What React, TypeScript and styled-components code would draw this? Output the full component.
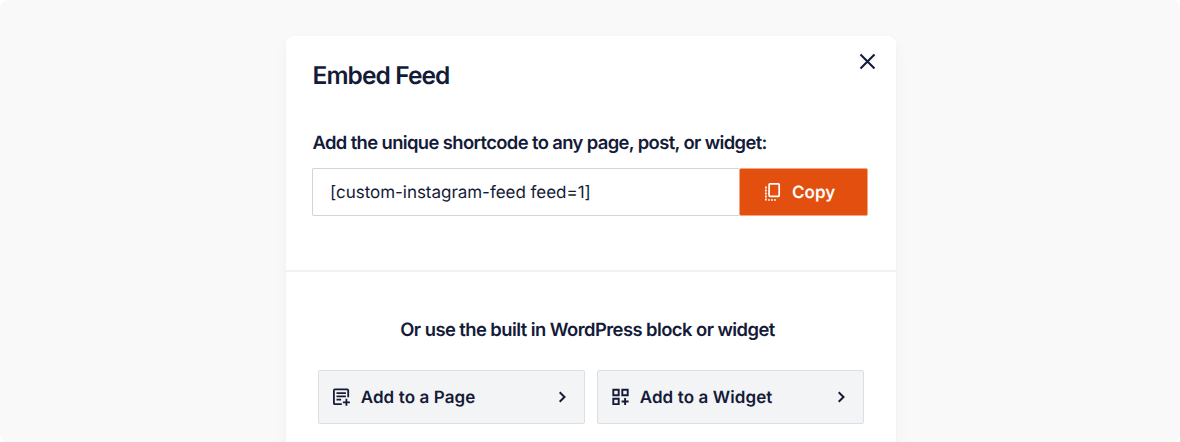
import React from "react";
import styled, { createGlobalStyle } from "styled-components";

const GlobalStyle = createGlobalStyle`
  * { box-sizing: border-box; }
  body {
    margin: 0;
    background: #fff;
    font-family: Inter, "Liberation Sans", sans-serif;
    color: #141b38;
    text-rendering: geometricPrecision;
  }
  h2, h3, p { margin: 0; }
  button { font-family: inherit; color: inherit; margin: 0; text-rendering: inherit; }
  svg { display: block; flex: none; }
`;

const Page = styled.main`
  height: 442px;
  overflow: hidden;
  display: flex;
  justify-content: center;
  align-items: flex-start;
  padding: 36px 0 0 2px;
  background: #f9f9f9;
  border-radius: 8px;
`;

const Modal = styled.section`
  width: 610px;
  height: 470px;
  background: #fff;
  border-radius: 8px;
  box-shadow: 0 6px 16px rgba(0, 0, 0, 0.035), 0 1px 5px rgba(0, 0, 0, 0.02);
`;

const ShortcodeSection = styled.div`
  height: 236px;
  padding: 0 28px 0 26px;
  border-bottom: 2px solid #f1f1f2;
`;

const Header = styled.header`
  display: flex;
  justify-content: space-between;
  align-items: flex-start;
  height: 93px;
`;

const Title = styled.h2`
  padding: 23px 0 0 0.5px;
  font-size: 24.5px;
  line-height: 32px;
  font-weight: 600;
  letter-spacing: -0.9px;
  white-space: nowrap;
`;

const CloseButton = styled.button`
  margin: 17px -8px 0 0;
  padding: 0;
  border: 0;
  background: none;
`;

const Label = styled.h3<{ $centered?: boolean }>`
  padding: ${(p) => (p.$centered ? "0 7px 0 0" : "0 0 0 0.5px")};
  font-size: 18.4px;
  line-height: 28px;
  font-weight: 600;
  letter-spacing: ${(p) => (p.$centered ? "-0.56px" : "-0.62px")};
  white-space: nowrap;
  text-align: ${(p) => (p.$centered ? "center" : "left")};
`;

const ShortcodeRow = styled.div`
  display: flex;
  height: 48px;
  margin-top: 11px;
`;

const Shortcode = styled.div`
  flex: 1;
  display: flex;
  align-items: center;
  padding: 2px 0 0 17px;
  border: 1px solid #d3d4d8;
  border-right: 0;
  border-radius: 2px 0 0 2px;
  font-size: 17px;
  letter-spacing: -0.03px;
  white-space: nowrap;
`;

const CopyButton = styled.button`
  width: 129px;
  display: flex;
  align-items: center;
  gap: 11px;
  padding: 0 0 0 24px;
  border: 1px solid #f0a584;
  border-radius: 2px;
  background: #e34f0e;
  color: #fff;
  font-size: 17px;
  font-weight: 600;
  letter-spacing: 0.05px;
`;

const CopyText = styled.span`
  padding-top: 2px;
`;

const BlockSection = styled.div`
  padding: 44px 32px 0;
`;

const Options = styled.div`
  display: grid;
  grid-template-columns: 1fr 1fr;
  gap: 12px;
  margin-top: 26px;
`;

const OptionButton = styled.button`
  height: 54px;
  display: flex;
  align-items: center;
  padding: 0 15.5px 0 13px;
  border: 1px solid #dedfe3;
  border-radius: 2px;
  background: #f3f4f5;
  font-size: 17px;
  font-weight: 600;
  letter-spacing: 0.1px;
  white-space: nowrap;
`;

const OptionText = styled.span`
  flex: 1;
  text-align: left;
  padding: 2px 0 0 8.7px;
`;

const CloseIcon = () => (
  <svg width="17" height="17" viewBox="0 0 17 17" fill="none" stroke="#141b38" strokeWidth="2.1">
    <path d="M1.5 1.5l14 14M15.5 1.5l-14 14" />
  </svg>
);

const CopyIcon = () => (
  <svg width="17" height="20" viewBox="0 0 17 20" fill="none" stroke="#fff" strokeWidth="1.7">
    <rect x="5.1" y="1.9" width="10.1" height="12.4" rx="0.8" />
    <path d="M1.9 4.6v14.4" strokeDasharray="1.8 1.2" />
    <path d="M4 18h8.6" strokeDasharray="1.8 1.2" />
  </svg>
);

const PageIcon = () => (
  <svg width="20" height="20" viewBox="0 0 20 20" fill="none" stroke="#141b38" strokeWidth="1.8">
    <path d="M16.2 10.2V3.4a1 1 0 0 0-1-1H2.9a1 1 0 0 0-1 1v12.8a1 1 0 0 0 1 1H9.8" />
    <path d="M4.5 6.1h9.4M4.5 9.4h9.4M4.5 12.7h4.6M14.4 11.8v7M10.9 15.3h7" />
  </svg>
);

const WidgetIcon = () => (
  <svg width="20" height="20" viewBox="0 0 20 20" fill="none" stroke="#141b38" strokeWidth="1.9">
    <path d="M2.3 2.8h5.4v5.4H2.3zM11.3 2.8h5.4v5.4h-5.4zM2.3 11.7h5.4v5.4H2.3zM14.1 11v7M10.6 14.5h7" />
  </svg>
);

const ChevronIcon = () => (
  <svg width="14" height="14" viewBox="0 0 14 14" fill="none" stroke="#141b38" strokeWidth="2">
    <path d="M4.7 2.3L9.5 7l-4.8 4.7" />
  </svg>
);

export default function App() {
  return (
    <>
      <GlobalStyle />
      <Page>
        <Modal>
          <ShortcodeSection>
            <Header>
              <Title>Embed Feed</Title>
              <CloseButton aria-label="Close"><CloseIcon /></CloseButton>
            </Header>
            <Label>Add the unique shortcode to any page, post, or widget:</Label>
            <ShortcodeRow>
              <Shortcode>[custom-instagram-feed feed=1]</Shortcode>
              <CopyButton><CopyIcon /><CopyText>Copy</CopyText></CopyButton>
            </ShortcodeRow>
          </ShortcodeSection>
          <BlockSection>
            <Label $centered>Or use the built in WordPress block or widget</Label>
            <Options>
              <OptionButton><PageIcon /><OptionText>Add to a Page</OptionText><ChevronIcon /></OptionButton>
              <OptionButton><WidgetIcon /><OptionText>Add to a Widget</OptionText><ChevronIcon /></OptionButton>
            </Options>
          </BlockSection>
        </Modal>
      </Page>
    </>
  );
}
